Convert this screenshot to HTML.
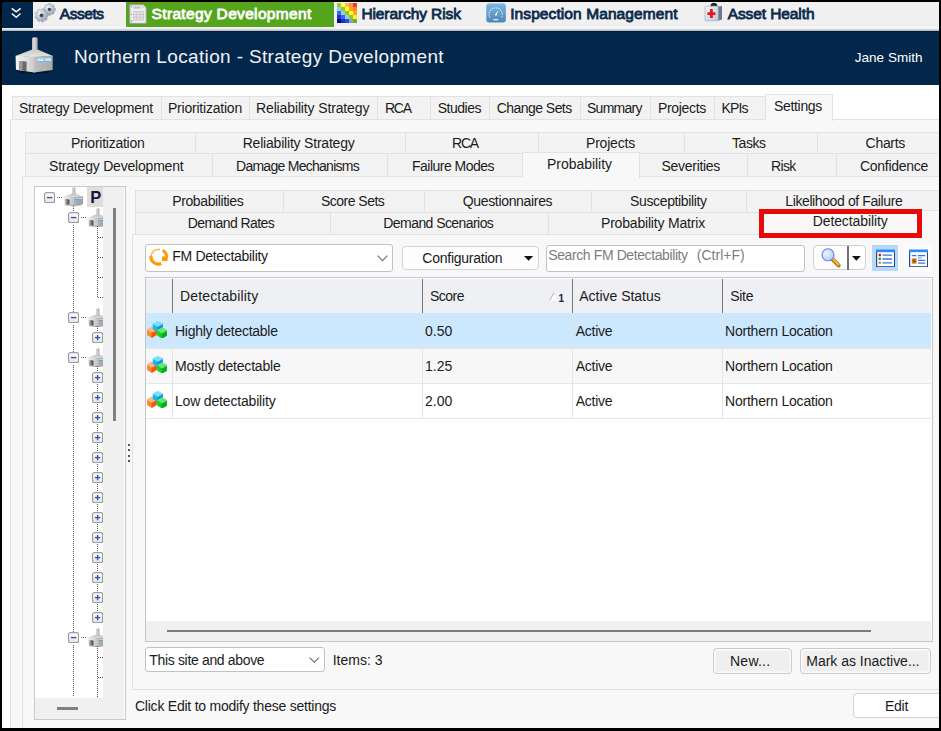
<!DOCTYPE html>
<html><head><meta charset="utf-8"><title>Strategy Development</title>
<style>
html,body{margin:0;padding:0;}
body{width:941px;height:731px;overflow:hidden;background:#000;font-family:"Liberation Sans", sans-serif;}
#app{position:absolute;left:0;top:0;width:941px;height:731px;overflow:hidden;background:#000;}
#app div,#app span,#app svg{position:absolute;box-sizing:border-box;}
#app span{white-space:pre;font-family:"Liberation Sans", sans-serif;}
</style></head><body>
<div id="app">
<div style="left:2px;top:2px;width:937px;height:726px;background:#ffffff;"></div>
<div style="left:2px;top:2px;width:937px;height:25px;background:#f0f0f0;"></div>
<div style="left:2px;top:27px;width:937px;height:4px;background:linear-gradient(#ffffff 0,#f6f7f8 28%,#d2d7dd 64%,#a9b2bc 100%);"></div>
<div style="left:2px;top:2px;width:31px;height:26px;background:#03274a;"></div>
<div style="left:126px;top:2px;width:208px;height:25px;background:#55a51c;"></div>
<div style="left:2px;top:31px;width:937px;height:53.5px;background:#03274a;"></div>
<div style="left:2px;top:31px;width:937px;height:1px;background:#021d3a;"></div>
<div style="left:9.5px;top:118.5px;width:940px;height:620px;background:#f8f8f8;border:1px solid #e2e2e2;"></div>
<div style="left:12px;top:96px;width:150px;height:24px;background:#f3f3f3;border:1px solid #e2e2e2;"></div>
<div style="left:161px;top:96px;width:89px;height:24px;background:#f3f3f3;border:1px solid #e2e2e2;"></div>
<div style="left:249px;top:96px;width:129px;height:24px;background:#f3f3f3;border:1px solid #e2e2e2;"></div>
<div style="left:377px;top:96px;width:54px;height:24px;background:#f3f3f3;border:1px solid #e2e2e2;"></div>
<div style="left:430px;top:96px;width:60px;height:24px;background:#f3f3f3;border:1px solid #e2e2e2;"></div>
<div style="left:489px;top:96px;width:92px;height:24px;background:#f3f3f3;border:1px solid #e2e2e2;"></div>
<div style="left:580px;top:96px;width:71px;height:24px;background:#f3f3f3;border:1px solid #e2e2e2;"></div>
<div style="left:650px;top:96px;width:65px;height:24px;background:#f3f3f3;border:1px solid #e2e2e2;"></div>
<div style="left:714px;top:96px;width:52px;height:24px;background:#f3f3f3;border:1px solid #e2e2e2;"></div>
<div style="left:765px;top:93.5px;width:68px;height:27px;background:#f8f8f8;border:1px solid #e2e2e2;border-bottom:none;"></div>
<div style="left:25px;top:131.5px;width:171px;height:22.5px;background:#f3f3f3;border:1px solid #e2e2e2;"></div>
<div style="left:195px;top:131.5px;width:211px;height:22.5px;background:#f3f3f3;border:1px solid #e2e2e2;"></div>
<div style="left:405px;top:131.5px;width:134px;height:22.5px;background:#f3f3f3;border:1px solid #e2e2e2;"></div>
<div style="left:538px;top:131.5px;width:147px;height:22.5px;background:#f3f3f3;border:1px solid #e2e2e2;"></div>
<div style="left:684px;top:131.5px;width:134px;height:22.5px;background:#f3f3f3;border:1px solid #e2e2e2;"></div>
<div style="left:817px;top:131.5px;width:137px;height:22.5px;background:#f3f3f3;border:1px solid #e2e2e2;"></div>
<div style="left:25px;top:153px;width:187.5px;height:24px;background:#f3f3f3;border:1px solid #e2e2e2;"></div>
<div style="left:211.5px;top:153px;width:176.5px;height:24px;background:#f3f3f3;border:1px solid #e2e2e2;"></div>
<div style="left:387px;top:153px;width:135.5px;height:24px;background:#f3f3f3;border:1px solid #e2e2e2;"></div>
<div style="left:639px;top:153px;width:108.5px;height:24px;background:#f3f3f3;border:1px solid #e2e2e2;"></div>
<div style="left:746.5px;top:153px;width:90.0px;height:24px;background:#f3f3f3;border:1px solid #e2e2e2;"></div>
<div style="left:835.5px;top:153px;width:118.5px;height:24px;background:#f3f3f3;border:1px solid #e2e2e2;"></div>
<div style="left:22px;top:176px;width:930px;height:560px;background:#f8f8f8;border:1px solid #e2e2e2;"></div>
<div style="left:521.5px;top:151.5px;width:118px;height:26px;background:#f8f8f8;border:1px solid #e2e2e2;border-bottom:none;"></div>
<div style="left:34.2px;top:186px;width:91.4px;height:533.6px;background:#ffffff;border:1.4px solid #c8cacd;"></div>
<div style="left:103px;top:187px;width:21.4px;height:531.6px;background:#f0f0f0;"></div>
<div style="left:35px;top:698px;width:89.4px;height:20.6px;background:#f0f0f0;"></div>
<div style="left:113px;top:208.3px;width:2.7px;height:212.3px;background:#808080;"></div>
<div style="left:57px;top:707.3px;width:21.2px;height:2.8px;background:#808080;"></div>
<div style="left:128px;top:444.0px;width:2px;height:2px;background:#555;"></div>
<div style="left:128px;top:449.3px;width:2px;height:2px;background:#555;"></div>
<div style="left:128px;top:454.6px;width:2px;height:2px;background:#555;"></div>
<div style="left:128px;top:459.9px;width:2px;height:2px;background:#555;"></div>
<div style="left:135px;top:189.5px;width:148.5px;height:23.0px;background:#f3f3f3;border:1px solid #e2e2e2;"></div>
<div style="left:282.5px;top:189.5px;width:142.0px;height:23.0px;background:#f3f3f3;border:1px solid #e2e2e2;"></div>
<div style="left:423.5px;top:189.5px;width:168.5px;height:23.0px;background:#f3f3f3;border:1px solid #e2e2e2;"></div>
<div style="left:591px;top:189.5px;width:156px;height:23.0px;background:#f3f3f3;border:1px solid #e2e2e2;"></div>
<div style="left:746px;top:189.5px;width:208px;height:23.0px;background:#f3f3f3;border:1px solid #e2e2e2;"></div>
<div style="left:135px;top:211.5px;width:195.5px;height:23.5px;background:#f3f3f3;border:1px solid #e2e2e2;"></div>
<div style="left:329.5px;top:211.5px;width:219.0px;height:23.5px;background:#f3f3f3;border:1px solid #e2e2e2;"></div>
<div style="left:547.5px;top:211.5px;width:214.5px;height:23.5px;background:#f3f3f3;border:1px solid #e2e2e2;"></div>
<div style="left:132.3px;top:234px;width:820px;height:455.5px;background:#f8f8f8;border:1px solid #e2e2e2;"></div>
<div style="left:761px;top:210px;width:192px;height:25px;background:#f8f8f8;border:1px solid #e2e2e2;border-bottom:none;"></div>
<div style="left:144.5px;top:244px;width:248.5px;height:27.7px;background:#fff;border:1px solid #c2c2c2;border-radius:3px;"></div>
<div style="left:402px;top:246px;width:136.6px;height:24px;background:#fdfdfd;border:1px solid #d4d4d4;border-radius:4px;"></div>
<div style="left:546px;top:244.5px;width:258.5px;height:27px;background:#fff;border:1px solid #c2c2c2;border-radius:3px;"></div>
<div style="left:812.6px;top:245.3px;width:53.2px;height:25px;background:#fefefe;border:1px solid #cfcfcf;border-radius:4.5px;"></div>
<div style="left:847.1px;top:246px;width:1.6px;height:23.6px;background:#707070;"></div>
<div style="left:872.2px;top:244.7px;width:26.3px;height:26px;background:#b9d7fa;"></div>
<div style="left:904px;top:243.5px;width:28px;height:28px;background:#fcfcfc;"></div>
<div style="left:144.5px;top:277px;width:788px;height:365px;background:#fff;border:1.5px solid #c6c6ca;"></div>
<div style="left:146px;top:278.5px;width:785px;height:34.5px;background:#eef0f4;"></div>
<div style="left:146px;top:313px;width:785px;height:34.5px;background:#cce8ff;"></div>
<div style="left:146px;top:347.5px;width:785px;height:35px;background:#f7f7f7;"></div>
<div style="left:146px;top:347.5px;width:785px;height:1px;background:#e7e7e7;"></div>
<div style="left:146px;top:382.5px;width:785px;height:1px;background:#e7e7e7;"></div>
<div style="left:146px;top:417.5px;width:785px;height:1px;background:#e7e7e7;"></div>
<div style="left:172px;top:278.5px;width:1px;height:34.5px;background:#777;"></div>
<div style="left:172px;top:313px;width:1px;height:105px;background:#e4e4e6;"></div>
<div style="left:422px;top:278.5px;width:1px;height:34.5px;background:#777;"></div>
<div style="left:422px;top:313px;width:1px;height:105px;background:#e4e4e6;"></div>
<div style="left:572px;top:278.5px;width:1px;height:34.5px;background:#777;"></div>
<div style="left:572px;top:313px;width:1px;height:105px;background:#e4e4e6;"></div>
<div style="left:722px;top:278.5px;width:1px;height:34.5px;background:#777;"></div>
<div style="left:722px;top:313px;width:1px;height:105px;background:#e4e4e6;"></div>
<div style="left:146px;top:621px;width:785px;height:19.5px;background:#f0f0f0;"></div>
<div style="left:166.5px;top:629.7px;width:704.5px;height:2px;background:#7a7a7a;"></div>
<div style="left:145px;top:646.5px;width:179.5px;height:25px;background:#fff;border:1px solid #c2c2c2;border-radius:3px;"></div>
<div style="left:713px;top:648px;width:78.5px;height:25.5px;background:#efefef;border:1px solid #cbcbcb;border-radius:4px;box-shadow:inset 0 0 0 1.5px #fbfbfb;"></div>
<div style="left:799.5px;top:648px;width:131px;height:25.5px;background:#efefef;border:1px solid #cbcbcb;border-radius:4px;box-shadow:inset 0 0 0 1.5px #fbfbfb;"></div>
<div style="left:853px;top:692.8px;width:100px;height:25.4px;background:#fff;border:1px solid #d2d2d2;border-radius:4px;"></div>
<svg width="0" height="0" style="left:0;top:0"><defs>
<linearGradient id="gLw" x1="0" y1="0" x2="1" y2="0"><stop offset="0" stop-color="#f4f4f4"/><stop offset="0.55" stop-color="#e2e2e2"/><stop offset="1" stop-color="#c9c9c9"/></linearGradient>
<linearGradient id="gRw" x1="0" y1="0" x2="1" y2="0"><stop offset="0" stop-color="#bdbdbd"/><stop offset="1" stop-color="#a9a9a9"/></linearGradient>
<linearGradient id="gRoof" x1="0" y1="0" x2="0" y2="1"><stop offset="0" stop-color="#c9c9c9"/><stop offset="1" stop-color="#e6e6e6"/></linearGradient>
<linearGradient id="gCh" x1="0" y1="0" x2="1" y2="0"><stop offset="0" stop-color="#bdbdbd"/><stop offset="0.4" stop-color="#dcdcdc"/><stop offset="1" stop-color="#a6a6a6"/></linearGradient>
<linearGradient id="gWin" x1="0" y1="0" x2="0" y2="1"><stop offset="0" stop-color="#8fd0f7"/><stop offset="0.55" stop-color="#e8f6ff"/><stop offset="0.7" stop-color="#5fb0e8"/><stop offset="1" stop-color="#8fd0f7"/></linearGradient>
<linearGradient id="gInsp" x1="0" y1="0" x2="0" y2="1"><stop offset="0" stop-color="#8fc1e8"/><stop offset="0.15" stop-color="#76aedb"/><stop offset="1" stop-color="#4f86b8"/></linearGradient>
<radialGradient id="gGear" cx="0.35" cy="0.3" r="0.8"><stop offset="0" stop-color="#eef1f5"/><stop offset="0.6" stop-color="#b4bdca"/><stop offset="1" stop-color="#8c97a8"/></radialGradient>
<radialGradient id="gBlue" cx="0.45" cy="0.25" r="0.8"><stop offset="0" stop-color="#7fe4ff"/><stop offset="0.5" stop-color="#14b4f6"/><stop offset="1" stop-color="#0f72d8"/></radialGradient>
<radialGradient id="gOr" cx="0.4" cy="0.2" r="0.85"><stop offset="0" stop-color="#ffc08a"/><stop offset="0.5" stop-color="#ff7a22"/><stop offset="1" stop-color="#e04a00"/></radialGradient>
<radialGradient id="gGr" cx="0.55" cy="0.25" r="0.8"><stop offset="0" stop-color="#6cf07a"/><stop offset="0.5" stop-color="#12cc24"/><stop offset="1" stop-color="#089a14"/></radialGradient>
<radialGradient id="gLens" cx="0.35" cy="0.35" r="0.8"><stop offset="0" stop-color="#eef6ff"/><stop offset="1" stop-color="#a9c9fa"/></radialGradient>
<linearGradient id="gHandle" x1="0" y1="0" x2="1" y2="0"><stop offset="0" stop-color="#f3cf78"/><stop offset="1" stop-color="#c77f0c"/></linearGradient>
<linearGradient id="gBox" x1="0" y1="0" x2="0" y2="1"><stop offset="0" stop-color="#ffffff"/><stop offset="1" stop-color="#e6e6e6"/></linearGradient>
<linearGradient id="gKit" x1="0" y1="0" x2="1" y2="1"><stop offset="0" stop-color="#f4f8fc"/><stop offset="1" stop-color="#b9c9dc"/></linearGradient>
<symbol id="factory" viewBox="0 0 40 38">
 <ellipse cx="20" cy="35.2" rx="17" ry="2.2" fill="#000" opacity="0.35"/>
 <path d="M18.3 1.6 Q18.3 0.3 21.2 0.3 Q24 0.3 24 1.6 L24 14 L18.3 14 Z" fill="url(#gCh)"/>
 <path d="M1.6 19.2 L17.6 12.9 L24.6 12.9 L39.4 19.2 L20.6 20.6 Z" fill="url(#gRoof)"/>
 <path d="M1.6 19 L20.6 20 L20.6 36.2 L2 33.4 Z" fill="url(#gLw)"/>
 <path d="M20.6 20 L39.4 19 L39.2 33.6 L20.6 36.2 Z" fill="url(#gRw)"/>
 <path d="M20.6 20 L20.6 36.2" stroke="#d9d9d9" stroke-width="0.8"/>
 <path d="M5.4 24.4 L12.8 24.8 L12.8 34.9 L5.4 33.8 Z" fill="#6a6a6a"/>
 <path d="M5.4 24.4 L8.6 24.6 L8.6 34.3 L5.4 33.8 Z" fill="#9a9a9a"/>
 <path d="M24 21.6 L30.2 21.3 L30.2 25.9 L24 26.2 Z" fill="url(#gWin)"/>
 <path d="M31.6 21.3 L37.6 21 L37.6 25.5 L31.6 25.8 Z" fill="url(#gWin)"/>
</symbol>
</defs></svg>
<svg style="left:9px;top:6px;" width="14" height="14" viewBox="0 0 14 14"><path d="M3.4 2.9 L7.2 5.9 L11 2.9 M3.4 8 L7.2 11.3 L11 8" fill="none" stroke="#fff" stroke-width="1.5" stroke-linecap="square"/></svg>
<svg style="left:34px;top:2px;" width="24" height="24" viewBox="0 0 24 24"><path d="M19.82 5.81 L21.28 6.22 L21.28 8.58 L19.82 8.99 L19.68 9.33 L20.42 10.65 L18.75 12.32 L17.43 11.58 L17.09 11.72 L16.68 13.18 L14.32 13.18 L13.91 11.72 L13.57 11.58 L12.25 12.32 L10.58 10.65 L11.32 9.33 L11.18 8.99 L9.72 8.58 L9.72 6.22 L11.18 5.81 L11.32 5.47 L10.58 4.15 L12.25 2.48 L13.57 3.22 L13.91 3.08 L14.32 1.62 L16.68 1.62 L17.09 3.08 L17.43 3.22 L18.75 2.48 L20.42 4.15 L19.68 5.47 Z" fill="url(#gGear)" stroke="#8a95a6" stroke-width="0.5"/><circle cx="15.5" cy="7.4" r="1.77" fill="#565f6e"/><circle cx="15.2" cy="7.1000000000000005" r="0.94" fill="#2f3642"/><path d="M12.50 11.82 L14.09 12.23 L14.09 14.57 L12.50 14.98 L12.37 15.34 L13.33 16.68 L11.82 18.47 L10.33 17.76 L10.01 17.95 L9.88 19.59 L7.57 20.00 L6.89 18.50 L6.52 18.43 L5.37 19.61 L3.34 18.44 L3.78 16.85 L3.54 16.56 L1.90 16.72 L1.10 14.52 L2.46 13.59 L2.46 13.21 L1.10 12.28 L1.90 10.08 L3.54 10.24 L3.78 9.95 L3.34 8.36 L5.37 7.19 L6.52 8.37 L6.89 8.30 L7.57 6.80 L9.88 7.21 L10.01 8.85 L10.33 9.04 L11.82 8.33 L13.33 10.12 L12.37 11.46 Z" fill="url(#gGear)" stroke="#8a95a6" stroke-width="0.5"/><circle cx="7.6" cy="13.4" r="1.98" fill="#565f6e"/><circle cx="7.3" cy="13.1" r="1.06" fill="#2f3642"/></svg>
<svg preserveAspectRatio="none" style="left:129px;top:3.5px;" width="18" height="20.2" viewBox="0 0 17.4 19.6"><path d="M0.8 0.8 L13.6 0.8 L16.6 3.6 L16.6 18.8 L0.8 18.8 Z" fill="#eeeeee" stroke="#a2a2a2" stroke-width="0.9"/><path d="M13.6 0.8 L13.6 3.6 L16.6 3.6" fill="#fafafa" stroke="#b5b5b5" stroke-width="0.6"/><rect x="4.6" y="2.6" width="6.6" height="1.8" fill="#bdbdbd"/><rect x="4.6" y="7.4" width="9.4" height="8.2" fill="#e2e2e2" stroke="#c2c2c2" stroke-width="0.7"/><path d="M7.6 7.4 V15.6 M11 7.4 V15.6 M4.6 10.2 H14 M4.6 12.9 H14" stroke="#c6c6c6" stroke-width="0.7"/><circle cx="2.5" cy="2.7" r="0.55" fill="#555"/><circle cx="2.5" cy="10" r="0.55" fill="#777"/><circle cx="2.5" cy="16.4" r="0.55" fill="#666"/></svg>
<svg style="left:337px;top:3.2px;" width="20" height="20" viewBox="0 0 20 20"><rect x="0" y="0" width="4.05" height="4.05" fill="#9fce22"/><rect x="4" y="0" width="4.05" height="4.05" fill="#ffff55"/><rect x="8" y="0" width="4.05" height="4.05" fill="#ffb668"/><rect x="12" y="0" width="4.05" height="4.05" fill="#ff9736"/><rect x="16" y="0" width="4.05" height="4.05" fill="#f13a34"/><rect x="0" y="4" width="4.05" height="4.05" fill="#96cbff"/><rect x="4" y="4" width="4.05" height="4.05" fill="#93c91c"/><rect x="8" y="4" width="4.05" height="4.05" fill="#ffff24"/><rect x="12" y="4" width="4.05" height="4.05" fill="#ffa526"/><rect x="16" y="4" width="4.05" height="4.05" fill="#ff8424"/><rect x="0" y="8" width="4.05" height="4.05" fill="#3466f2"/><rect x="4" y="8" width="4.05" height="4.05" fill="#96cbff"/><rect x="8" y="8" width="4.05" height="4.05" fill="#93c91c"/><rect x="12" y="8" width="4.05" height="4.05" fill="#ffff24"/><rect x="16" y="8" width="4.05" height="4.05" fill="#ffa526"/><rect x="0" y="12" width="4.05" height="4.05" fill="#2434b2"/><rect x="4" y="12" width="4.05" height="4.05" fill="#3466f2"/><rect x="8" y="12" width="4.05" height="4.05" fill="#96cbff"/><rect x="12" y="12" width="4.05" height="4.05" fill="#93c91c"/><rect x="16" y="12" width="4.05" height="4.05" fill="#f6f622"/><rect x="0" y="16" width="4.05" height="4.05" fill="#04048e"/><rect x="4" y="16" width="4.05" height="4.05" fill="#2232ae"/><rect x="8" y="16" width="4.05" height="4.05" fill="#2454d2"/><rect x="12" y="16" width="4.05" height="4.05" fill="#74a4e0"/><rect x="16" y="16" width="4.05" height="4.05" fill="#82aa12"/></svg>
<svg style="left:486px;top:3.4px;" width="20" height="20" viewBox="0 0 20 20"><rect x="0.3" y="0.3" width="19.6" height="19.2" rx="3" fill="url(#gInsp)"/><path d="M3.9 14.6 A6.6 6.6 0 1 1 15.5 14.6" fill="none" stroke="#eaf3fb" stroke-width="1.25" stroke-dasharray="1.3 1" opacity="0.85"/><path d="M8.6 12.2 L12.2 7.2 L10.6 12.6 Z" fill="#ffffff"/><rect x="7.2" y="16" width="5" height="1.3" fill="#d7e6f3"/></svg>
<svg style="left:703.6px;top:3px;" width="19" height="19" viewBox="0 0 19 19"><path d="M7.2 3.4 Q7.2 0.7 10 0.7 Q12.6 0.7 12.6 3.4" fill="#3a3a3a" stroke="#1d1d1d" stroke-width="1.5"/><path d="M14 3.4 L18 3 L18 16.6 L14.2 17.8 Z" fill="#6b7b8d"/><rect x="1" y="3.2" width="13.2" height="14.6" rx="0.8" fill="url(#gKit)" stroke="#9aa7b6" stroke-width="0.6"/><path d="M6 6 H8.8 V9.2 H11.4 V12 H8.8 V15 H6 V12 H3.4 V9.2 H6 Z" fill="#f4121a"/></svg>
<svg style="left:13.6px;top:36.8px;" width="39.4" height="37.4" viewBox="0 0 40 38" preserveAspectRatio="none"><use href="#factory"/></svg>
<svg style="left:148.6px;top:248px;" width="20" height="17.5" viewBox="0 0 20 17.5"><path d="M10.8 1.6 A7.2 7.2 0 0 0 2.2 8.6" fill="none" stroke="#ff9a0a" stroke-width="1.5" stroke-dasharray="1.5 0.6"/><path d="M2 8.2 A7.2 7.2 0 0 0 12.2 15.4" fill="none" stroke="#ff9a0a" stroke-width="3.3"/><path d="M13.6 2.4 A7.4 7.4 0 0 1 17.6 9.4" fill="none" stroke="#ff9a0a" stroke-width="3"/><path d="M13 8.4 L19.2 8 L18.4 12.9 L13 12.9 Z" fill="#ff9a0a"/></svg>
<svg style="left:524.4px;top:256.2px;" width="9.2" height="4.8" viewBox="0 0 9.2 4.8"><path d="M0 0 L9.2 0 L4.6 4.8 Z" fill="#111"/></svg>
<svg style="left:821.4px;top:248.2px;" width="21" height="21" viewBox="0 0 21 21"><path d="M11.4 11 L17.6 17.4" stroke="#b9770e" stroke-width="4.2" stroke-linecap="round"/><path d="M11.6 10.6 L17.4 16.6" stroke="#efc261" stroke-width="1.8" stroke-linecap="round"/><circle cx="7" cy="6.8" r="6" fill="url(#gLens)" stroke="#6c7cf2" stroke-width="1.1"/></svg>
<svg style="left:852.2px;top:256.2px;" width="8.8" height="4.8" viewBox="0 0 8.8 4.8"><path d="M0 0 L8.8 0 L4.4 4.8 Z" fill="#111"/></svg>
<svg style="left:875.8px;top:248.6px;" width="19.2" height="18.6" viewBox="0 0 19.2 18.6"><rect x="0.6" y="2" width="18" height="15.8" fill="#fff" stroke="#1c4b9c" stroke-width="1.2"/><rect x="0" y="0.5" width="19.2" height="2.7" fill="#2c8cf6"/><rect x="2.6" y="4.8" width="2.4" height="2.4" rx="0.6" fill="#d01414"/><rect x="2.6" y="8.6" width="2.4" height="2.4" rx="0.6" fill="#12a234"/><rect x="2.6" y="12.4" width="2.4" height="2.4" rx="0.6" fill="#ff7a00"/><path d="M6.4 6.2 H16 M6.4 10 H16 M6.4 13.8 H16" stroke="#3b78d2" stroke-width="1.3"/></svg>
<svg style="left:908.5px;top:248.6px;" width="19.2" height="18.6" viewBox="0 0 19.2 18.6"><rect x="0.6" y="2" width="18" height="15.8" fill="#fff" stroke="#1c4b9c" stroke-width="1.2"/><rect x="0" y="0.5" width="19.2" height="2.7" fill="#2c8cf6"/><path d="M2.8 6.6 H7.4 M9 6.6 H16.2 M9 11.4 H16.2 M9 14.2 H16.2" stroke="#3b78d2" stroke-width="1.3"/><path d="M9 8.9 H12.6" stroke="#6fa0e4" stroke-width="1.2"/><rect x="2.8" y="9.4" width="4.8" height="5.2" fill="#cf7c18"/><rect x="4.1" y="10.8" width="2.2" height="2.4" fill="#8a5210"/></svg>
<svg style="left:376.8px;top:255.2px;" width="11" height="6.4" viewBox="0 0 11 6.4"><path d="M0.6 0.6 L5.5 5.6000000000000005 L10.4 0.6" fill="none" stroke="#6f6f6f" stroke-width="1.1"/></svg>
<svg style="left:309.4px;top:657.2px;" width="10.6" height="6" viewBox="0 0 10.6 6"><path d="M0.6 0.6 L5.3 5.2 L10.0 0.6" fill="none" stroke="#6f6f6f" stroke-width="1.1"/></svg>
<svg style="left:147px;top:320.6px;" width="20" height="17.5" viewBox="0 0 20 17.5"><path d="M0.30 8.60 L4.90 11.20 L4.90 16.40 L0.30 13.80 Z" fill="#ff8630" stroke="#ff8630" stroke-width="0.9" stroke-linejoin="round"/><path d="M9.50 8.60 L9.50 13.80 L4.90 16.40 L4.90 11.20 Z" fill="#ee5c08" stroke="#ee5c08" stroke-width="0.9" stroke-linejoin="round"/><path d="M4.90 6.00 L9.50 8.60 L4.90 11.20 L0.30 8.60 Z" fill="#ffb57a" stroke="#ffb57a" stroke-width="0.9" stroke-linejoin="round"/><path d="M6.20 2.80 L10.80 5.40 L10.80 10.60 L6.20 8.00 Z" fill="#14b8f8" stroke="#14b8f8" stroke-width="0.9" stroke-linejoin="round"/><path d="M15.40 2.80 L15.40 8.00 L10.80 10.60 L10.80 5.40 Z" fill="#1090ea" stroke="#1090ea" stroke-width="0.9" stroke-linejoin="round"/><path d="M10.80 0.20 L15.40 2.80 L10.80 5.40 L6.20 2.80 Z" fill="#78e0ff" stroke="#78e0ff" stroke-width="0.9" stroke-linejoin="round"/><path d="M10.60 9.30 L15.20 11.90 L15.20 17.10 L10.60 14.50 Z" fill="#10d424" stroke="#10d424" stroke-width="0.9" stroke-linejoin="round"/><path d="M19.80 9.30 L19.80 14.50 L15.20 17.10 L15.20 11.90 Z" fill="#0aaa1a" stroke="#0aaa1a" stroke-width="0.9" stroke-linejoin="round"/><path d="M15.20 6.70 L19.80 9.30 L15.20 11.90 L10.60 9.30 Z" fill="#62ea70" stroke="#62ea70" stroke-width="0.9" stroke-linejoin="round"/></svg>
<svg style="left:147px;top:355.6px;" width="20" height="17.5" viewBox="0 0 20 17.5"><path d="M0.30 8.60 L4.90 11.20 L4.90 16.40 L0.30 13.80 Z" fill="#ff8630" stroke="#ff8630" stroke-width="0.9" stroke-linejoin="round"/><path d="M9.50 8.60 L9.50 13.80 L4.90 16.40 L4.90 11.20 Z" fill="#ee5c08" stroke="#ee5c08" stroke-width="0.9" stroke-linejoin="round"/><path d="M4.90 6.00 L9.50 8.60 L4.90 11.20 L0.30 8.60 Z" fill="#ffb57a" stroke="#ffb57a" stroke-width="0.9" stroke-linejoin="round"/><path d="M6.20 2.80 L10.80 5.40 L10.80 10.60 L6.20 8.00 Z" fill="#14b8f8" stroke="#14b8f8" stroke-width="0.9" stroke-linejoin="round"/><path d="M15.40 2.80 L15.40 8.00 L10.80 10.60 L10.80 5.40 Z" fill="#1090ea" stroke="#1090ea" stroke-width="0.9" stroke-linejoin="round"/><path d="M10.80 0.20 L15.40 2.80 L10.80 5.40 L6.20 2.80 Z" fill="#78e0ff" stroke="#78e0ff" stroke-width="0.9" stroke-linejoin="round"/><path d="M10.60 9.30 L15.20 11.90 L15.20 17.10 L10.60 14.50 Z" fill="#10d424" stroke="#10d424" stroke-width="0.9" stroke-linejoin="round"/><path d="M19.80 9.30 L19.80 14.50 L15.20 17.10 L15.20 11.90 Z" fill="#0aaa1a" stroke="#0aaa1a" stroke-width="0.9" stroke-linejoin="round"/><path d="M15.20 6.70 L19.80 9.30 L15.20 11.90 L10.60 9.30 Z" fill="#62ea70" stroke="#62ea70" stroke-width="0.9" stroke-linejoin="round"/></svg>
<svg style="left:147px;top:390.6px;" width="20" height="17.5" viewBox="0 0 20 17.5"><path d="M0.30 8.60 L4.90 11.20 L4.90 16.40 L0.30 13.80 Z" fill="#ff8630" stroke="#ff8630" stroke-width="0.9" stroke-linejoin="round"/><path d="M9.50 8.60 L9.50 13.80 L4.90 16.40 L4.90 11.20 Z" fill="#ee5c08" stroke="#ee5c08" stroke-width="0.9" stroke-linejoin="round"/><path d="M4.90 6.00 L9.50 8.60 L4.90 11.20 L0.30 8.60 Z" fill="#ffb57a" stroke="#ffb57a" stroke-width="0.9" stroke-linejoin="round"/><path d="M6.20 2.80 L10.80 5.40 L10.80 10.60 L6.20 8.00 Z" fill="#14b8f8" stroke="#14b8f8" stroke-width="0.9" stroke-linejoin="round"/><path d="M15.40 2.80 L15.40 8.00 L10.80 10.60 L10.80 5.40 Z" fill="#1090ea" stroke="#1090ea" stroke-width="0.9" stroke-linejoin="round"/><path d="M10.80 0.20 L15.40 2.80 L10.80 5.40 L6.20 2.80 Z" fill="#78e0ff" stroke="#78e0ff" stroke-width="0.9" stroke-linejoin="round"/><path d="M10.60 9.30 L15.20 11.90 L15.20 17.10 L10.60 14.50 Z" fill="#10d424" stroke="#10d424" stroke-width="0.9" stroke-linejoin="round"/><path d="M19.80 9.30 L19.80 14.50 L15.20 17.10 L15.20 11.90 Z" fill="#0aaa1a" stroke="#0aaa1a" stroke-width="0.9" stroke-linejoin="round"/><path d="M15.20 6.70 L19.80 9.30 L15.20 11.90 L10.60 9.30 Z" fill="#62ea70" stroke="#62ea70" stroke-width="0.9" stroke-linejoin="round"/></svg>
<svg style="left:549px;top:291.6px;" width="9.6" height="9.2" viewBox="0 0 9.6 9.2"><path d="M0.8 8.4 L4.8 0.8 L8.8 8.4 Z" fill="#ffffff"/><path d="M0.8 8.4 L4.8 0.8" stroke="#a9a9a9" stroke-width="0.9" fill="none"/></svg>
<svg style="left:44.3px;top:192.2px;" width="11.2" height="11.2" viewBox="0 0 11.2 11.2"><rect x="0.6" y="0.6" width="10" height="10" rx="1.8" fill="url(#gBox)" stroke="#9c9c9c" stroke-width="1.2"/><rect x="2.9" y="4.9" width="5.4" height="1.4" fill="#3653b4"/></svg>
<div style="left:57px;top:197.0px;width:6px;height:1px;background:repeating-linear-gradient(to right,#555 0,#555 1px,transparent 1px,transparent 2px);"></div>
<svg style="left:62.7px;top:187px;filter:brightness(0.9) contrast(1.2);" width="20.6" height="19.2" viewBox="0 0 40 38" preserveAspectRatio="none"><use href="#factory"/></svg>
<div style="left:87px;top:187px;width:16px;height:20px;background:#dedede;"></div>
<div style="left:73px;top:206px;width:1px;height:6px;background:repeating-linear-gradient(to bottom,#555 0,#555 1px,transparent 1px,transparent 2px);"></div>
<div style="left:73px;top:223px;width:1px;height:474px;background:repeating-linear-gradient(to bottom,#555 0,#555 1px,transparent 1px,transparent 2px);"></div>
<div style="left:68px;top:211.5px;width:12px;height:12px;background:#fff;"></div>
<svg style="left:68.1px;top:212.0px;" width="11.2" height="11.2" viewBox="0 0 11.2 11.2"><rect x="0.6" y="0.6" width="10" height="10" rx="1.8" fill="url(#gBox)" stroke="#9c9c9c" stroke-width="1.2"/><rect x="2.9" y="4.9" width="5.4" height="1.4" fill="#3653b4"/></svg>
<div style="left:80.5px;top:217.0px;width:6.5px;height:1px;background:repeating-linear-gradient(to right,#555 0,#555 1px,transparent 1px,transparent 2px);"></div>
<div style="left:87px;top:207.5px;width:16px;height:19.2px;overflow:hidden"><svg style="left:0;top:0;filter:brightness(0.9) contrast(1.2);" width="20.6" height="19.2" viewBox="0 0 40 38" preserveAspectRatio="none"><use href="#factory"/></svg></div>
<div style="left:68px;top:311.5px;width:12px;height:12px;background:#fff;"></div>
<svg style="left:68.1px;top:312.0px;" width="11.2" height="11.2" viewBox="0 0 11.2 11.2"><rect x="0.6" y="0.6" width="10" height="10" rx="1.8" fill="url(#gBox)" stroke="#9c9c9c" stroke-width="1.2"/><rect x="2.9" y="4.9" width="5.4" height="1.4" fill="#3653b4"/></svg>
<div style="left:80.5px;top:317.0px;width:6.5px;height:1px;background:repeating-linear-gradient(to right,#555 0,#555 1px,transparent 1px,transparent 2px);"></div>
<div style="left:87px;top:307.5px;width:16px;height:19.2px;overflow:hidden"><svg style="left:0;top:0;filter:brightness(0.9) contrast(1.2);" width="20.6" height="19.2" viewBox="0 0 40 38" preserveAspectRatio="none"><use href="#factory"/></svg></div>
<div style="left:68px;top:351.5px;width:12px;height:12px;background:#fff;"></div>
<svg style="left:68.1px;top:352.0px;" width="11.2" height="11.2" viewBox="0 0 11.2 11.2"><rect x="0.6" y="0.6" width="10" height="10" rx="1.8" fill="url(#gBox)" stroke="#9c9c9c" stroke-width="1.2"/><rect x="2.9" y="4.9" width="5.4" height="1.4" fill="#3653b4"/></svg>
<div style="left:80.5px;top:357.0px;width:6.5px;height:1px;background:repeating-linear-gradient(to right,#555 0,#555 1px,transparent 1px,transparent 2px);"></div>
<div style="left:87px;top:347.5px;width:16px;height:19.2px;overflow:hidden"><svg style="left:0;top:0;filter:brightness(0.9) contrast(1.2);" width="20.6" height="19.2" viewBox="0 0 40 38" preserveAspectRatio="none"><use href="#factory"/></svg></div>
<div style="left:68px;top:631.5px;width:12px;height:12px;background:#fff;"></div>
<svg style="left:68.1px;top:632.0px;" width="11.2" height="11.2" viewBox="0 0 11.2 11.2"><rect x="0.6" y="0.6" width="10" height="10" rx="1.8" fill="url(#gBox)" stroke="#9c9c9c" stroke-width="1.2"/><rect x="2.9" y="4.9" width="5.4" height="1.4" fill="#3653b4"/></svg>
<div style="left:80.5px;top:637.0px;width:6.5px;height:1px;background:repeating-linear-gradient(to right,#555 0,#555 1px,transparent 1px,transparent 2px);"></div>
<div style="left:87px;top:627.5px;width:16px;height:19.2px;overflow:hidden"><svg style="left:0;top:0;filter:brightness(0.9) contrast(1.2);" width="20.6" height="19.2" viewBox="0 0 40 38" preserveAspectRatio="none"><use href="#factory"/></svg></div>
<div style="left:97.3px;top:226px;width:1px;height:72px;background:repeating-linear-gradient(to bottom,#555 0,#555 1px,transparent 1px,transparent 2px);"></div>
<div style="left:98px;top:237.0px;width:5px;height:1px;background:repeating-linear-gradient(to right,#555 0,#555 1px,transparent 1px,transparent 2px);"></div>
<div style="left:98px;top:257.0px;width:5px;height:1px;background:repeating-linear-gradient(to right,#555 0,#555 1px,transparent 1px,transparent 2px);"></div>
<div style="left:98px;top:277.0px;width:5px;height:1px;background:repeating-linear-gradient(to right,#555 0,#555 1px,transparent 1px,transparent 2px);"></div>
<div style="left:98px;top:297.0px;width:5px;height:1px;background:repeating-linear-gradient(to right,#555 0,#555 1px,transparent 1px,transparent 2px);"></div>
<div style="left:97.3px;top:326px;width:1px;height:6px;background:repeating-linear-gradient(to bottom,#555 0,#555 1px,transparent 1px,transparent 2px);"></div>
<svg style="left:91.8px;top:332px;" width="11.2" height="11.2" viewBox="0 0 11.2 11.2"><rect x="0.6" y="0.6" width="10" height="10" rx="1.8" fill="url(#gBox)" stroke="#9c9c9c" stroke-width="1.2"/><rect x="2.9" y="4.9" width="5.4" height="1.4" fill="#3653b4"/><rect x="4.9" y="2.9" width="1.4" height="5.4" fill="#3653b4"/></svg>
<div style="left:97.3px;top:366px;width:1px;height:257px;background:repeating-linear-gradient(to bottom,#555 0,#555 1px,transparent 1px,transparent 2px);"></div>
<div style="left:91.5px;top:371.5px;width:11.5px;height:12px;background:#fff;"></div>
<svg style="left:91.8px;top:372.0px;" width="11.2" height="11.2" viewBox="0 0 11.2 11.2"><rect x="0.6" y="0.6" width="10" height="10" rx="1.8" fill="url(#gBox)" stroke="#9c9c9c" stroke-width="1.2"/><rect x="2.9" y="4.9" width="5.4" height="1.4" fill="#3653b4"/><rect x="4.9" y="2.9" width="1.4" height="5.4" fill="#3653b4"/></svg>
<div style="left:91.5px;top:391.5px;width:11.5px;height:12px;background:#fff;"></div>
<svg style="left:91.8px;top:392.0px;" width="11.2" height="11.2" viewBox="0 0 11.2 11.2"><rect x="0.6" y="0.6" width="10" height="10" rx="1.8" fill="url(#gBox)" stroke="#9c9c9c" stroke-width="1.2"/><rect x="2.9" y="4.9" width="5.4" height="1.4" fill="#3653b4"/><rect x="4.9" y="2.9" width="1.4" height="5.4" fill="#3653b4"/></svg>
<div style="left:91.5px;top:411.5px;width:11.5px;height:12px;background:#fff;"></div>
<svg style="left:91.8px;top:412.0px;" width="11.2" height="11.2" viewBox="0 0 11.2 11.2"><rect x="0.6" y="0.6" width="10" height="10" rx="1.8" fill="url(#gBox)" stroke="#9c9c9c" stroke-width="1.2"/><rect x="2.9" y="4.9" width="5.4" height="1.4" fill="#3653b4"/><rect x="4.9" y="2.9" width="1.4" height="5.4" fill="#3653b4"/></svg>
<div style="left:91.5px;top:431.5px;width:11.5px;height:12px;background:#fff;"></div>
<svg style="left:91.8px;top:432.0px;" width="11.2" height="11.2" viewBox="0 0 11.2 11.2"><rect x="0.6" y="0.6" width="10" height="10" rx="1.8" fill="url(#gBox)" stroke="#9c9c9c" stroke-width="1.2"/><rect x="2.9" y="4.9" width="5.4" height="1.4" fill="#3653b4"/><rect x="4.9" y="2.9" width="1.4" height="5.4" fill="#3653b4"/></svg>
<div style="left:91.5px;top:451.5px;width:11.5px;height:12px;background:#fff;"></div>
<svg style="left:91.8px;top:452.0px;" width="11.2" height="11.2" viewBox="0 0 11.2 11.2"><rect x="0.6" y="0.6" width="10" height="10" rx="1.8" fill="url(#gBox)" stroke="#9c9c9c" stroke-width="1.2"/><rect x="2.9" y="4.9" width="5.4" height="1.4" fill="#3653b4"/><rect x="4.9" y="2.9" width="1.4" height="5.4" fill="#3653b4"/></svg>
<div style="left:91.5px;top:471.5px;width:11.5px;height:12px;background:#fff;"></div>
<svg style="left:91.8px;top:472.0px;" width="11.2" height="11.2" viewBox="0 0 11.2 11.2"><rect x="0.6" y="0.6" width="10" height="10" rx="1.8" fill="url(#gBox)" stroke="#9c9c9c" stroke-width="1.2"/><rect x="2.9" y="4.9" width="5.4" height="1.4" fill="#3653b4"/><rect x="4.9" y="2.9" width="1.4" height="5.4" fill="#3653b4"/></svg>
<div style="left:91.5px;top:491.5px;width:11.5px;height:12px;background:#fff;"></div>
<svg style="left:91.8px;top:492.0px;" width="11.2" height="11.2" viewBox="0 0 11.2 11.2"><rect x="0.6" y="0.6" width="10" height="10" rx="1.8" fill="url(#gBox)" stroke="#9c9c9c" stroke-width="1.2"/><rect x="2.9" y="4.9" width="5.4" height="1.4" fill="#3653b4"/><rect x="4.9" y="2.9" width="1.4" height="5.4" fill="#3653b4"/></svg>
<div style="left:91.5px;top:511.5px;width:11.5px;height:12px;background:#fff;"></div>
<svg style="left:91.8px;top:512.0px;" width="11.2" height="11.2" viewBox="0 0 11.2 11.2"><rect x="0.6" y="0.6" width="10" height="10" rx="1.8" fill="url(#gBox)" stroke="#9c9c9c" stroke-width="1.2"/><rect x="2.9" y="4.9" width="5.4" height="1.4" fill="#3653b4"/><rect x="4.9" y="2.9" width="1.4" height="5.4" fill="#3653b4"/></svg>
<div style="left:91.5px;top:531.5px;width:11.5px;height:12px;background:#fff;"></div>
<svg style="left:91.8px;top:532.0px;" width="11.2" height="11.2" viewBox="0 0 11.2 11.2"><rect x="0.6" y="0.6" width="10" height="10" rx="1.8" fill="url(#gBox)" stroke="#9c9c9c" stroke-width="1.2"/><rect x="2.9" y="4.9" width="5.4" height="1.4" fill="#3653b4"/><rect x="4.9" y="2.9" width="1.4" height="5.4" fill="#3653b4"/></svg>
<div style="left:91.5px;top:551.5px;width:11.5px;height:12px;background:#fff;"></div>
<svg style="left:91.8px;top:552.0px;" width="11.2" height="11.2" viewBox="0 0 11.2 11.2"><rect x="0.6" y="0.6" width="10" height="10" rx="1.8" fill="url(#gBox)" stroke="#9c9c9c" stroke-width="1.2"/><rect x="2.9" y="4.9" width="5.4" height="1.4" fill="#3653b4"/><rect x="4.9" y="2.9" width="1.4" height="5.4" fill="#3653b4"/></svg>
<div style="left:91.5px;top:571.5px;width:11.5px;height:12px;background:#fff;"></div>
<svg style="left:91.8px;top:572.0px;" width="11.2" height="11.2" viewBox="0 0 11.2 11.2"><rect x="0.6" y="0.6" width="10" height="10" rx="1.8" fill="url(#gBox)" stroke="#9c9c9c" stroke-width="1.2"/><rect x="2.9" y="4.9" width="5.4" height="1.4" fill="#3653b4"/><rect x="4.9" y="2.9" width="1.4" height="5.4" fill="#3653b4"/></svg>
<div style="left:91.5px;top:591.5px;width:11.5px;height:12px;background:#fff;"></div>
<svg style="left:91.8px;top:592.0px;" width="11.2" height="11.2" viewBox="0 0 11.2 11.2"><rect x="0.6" y="0.6" width="10" height="10" rx="1.8" fill="url(#gBox)" stroke="#9c9c9c" stroke-width="1.2"/><rect x="2.9" y="4.9" width="5.4" height="1.4" fill="#3653b4"/><rect x="4.9" y="2.9" width="1.4" height="5.4" fill="#3653b4"/></svg>
<div style="left:91.5px;top:611.5px;width:11.5px;height:12px;background:#fff;"></div>
<svg style="left:91.8px;top:612.0px;" width="11.2" height="11.2" viewBox="0 0 11.2 11.2"><rect x="0.6" y="0.6" width="10" height="10" rx="1.8" fill="url(#gBox)" stroke="#9c9c9c" stroke-width="1.2"/><rect x="2.9" y="4.9" width="5.4" height="1.4" fill="#3653b4"/><rect x="4.9" y="2.9" width="1.4" height="5.4" fill="#3653b4"/></svg>
<div style="left:97.3px;top:646px;width:1px;height:51px;background:repeating-linear-gradient(to bottom,#555 0,#555 1px,transparent 1px,transparent 2px);"></div>
<div style="left:98px;top:657.0px;width:5px;height:1px;background:repeating-linear-gradient(to right,#555 0,#555 1px,transparent 1px,transparent 2px);"></div>
<div style="left:98px;top:677.0px;width:5px;height:1px;background:repeating-linear-gradient(to right,#555 0,#555 1px,transparent 1px,transparent 2px);"></div>
<span style="left:59.80px;top:5.00px;font-size:15.5px;line-height:17px;color:#0b2a4c;font-weight:normal;letter-spacing:-0.469px;-webkit-text-stroke:0.8px #0b2a4c;">Assets</span>
<span style="left:151.60px;top:5.00px;font-size:15.5px;line-height:17px;color:#ffffff;font-weight:normal;letter-spacing:0.332px;-webkit-text-stroke:0.8px #ffffff;">Strategy Development</span>
<span style="left:361.40px;top:5.00px;font-size:15.5px;line-height:17px;color:#0b2a4c;font-weight:normal;letter-spacing:-0.098px;-webkit-text-stroke:0.8px #0b2a4c;">Hierarchy Risk</span>
<span style="left:510.20px;top:5.00px;font-size:15.5px;line-height:17px;color:#0b2a4c;font-weight:normal;letter-spacing:0.093px;-webkit-text-stroke:0.8px #0b2a4c;">Inspection Management</span>
<span style="left:727.70px;top:5.00px;font-size:15.5px;line-height:17px;color:#0b2a4c;font-weight:normal;letter-spacing:-0.091px;-webkit-text-stroke:0.8px #0b2a4c;">Asset Health</span>
<span style="left:74.00px;top:46.00px;font-size:19px;line-height:21px;color:#eef2f6;font-weight:normal;letter-spacing:0.352px;">Northern Location - Strategy Development</span>
<span style="left:854.70px;top:50.00px;font-size:13.5px;line-height:15px;color:#ffffff;font-weight:normal;letter-spacing:0.035px;">Jane Smith</span>
<span style="left:19.00px;top:100.00px;font-size:14px;line-height:16px;color:#1b1b1b;font-weight:normal;letter-spacing:-0.227px;">Strategy Development</span>
<span style="left:168.00px;top:100.00px;font-size:14px;line-height:16px;color:#1b1b1b;font-weight:normal;letter-spacing:-0.217px;">Prioritization</span>
<span style="left:256.00px;top:100.00px;font-size:14px;line-height:16px;color:#1b1b1b;font-weight:normal;letter-spacing:-0.132px;">Reliability Strategy</span>
<span style="left:385.00px;top:100.00px;font-size:14px;line-height:16px;color:#1b1b1b;font-weight:normal;letter-spacing:-1.288px;">RCA</span>
<span style="left:437.70px;top:100.00px;font-size:14px;line-height:16px;color:#1b1b1b;font-weight:normal;letter-spacing:-0.486px;">Studies</span>
<span style="left:496.70px;top:100.00px;font-size:14px;line-height:16px;color:#1b1b1b;font-weight:normal;letter-spacing:-0.541px;">Change Sets</span>
<span style="left:587.00px;top:100.00px;font-size:14px;line-height:16px;color:#1b1b1b;font-weight:normal;letter-spacing:-0.744px;">Summary</span>
<span style="left:658.00px;top:100.00px;font-size:14px;line-height:16px;color:#1b1b1b;font-weight:normal;letter-spacing:-0.322px;">Projects</span>
<span style="left:721.40px;top:100.00px;font-size:14px;line-height:16px;color:#1b1b1b;font-weight:normal;letter-spacing:-0.795px;">KPIs</span>
<span style="left:774.00px;top:98.00px;font-size:14px;line-height:16px;color:#1b1b1b;font-weight:normal;letter-spacing:-0.324px;">Settings</span>
<span style="left:71.00px;top:135.00px;font-size:14px;line-height:16px;color:#1b1b1b;font-weight:normal;letter-spacing:-0.252px;">Prioritization</span>
<span style="left:242.70px;top:135.00px;font-size:14px;line-height:16px;color:#1b1b1b;font-weight:normal;letter-spacing:-0.202px;">Reliability Strategy</span>
<span style="left:452.00px;top:135.00px;font-size:14px;line-height:16px;color:#1b1b1b;font-weight:normal;letter-spacing:-1.188px;">RCA</span>
<span style="left:586.00px;top:135.00px;font-size:14px;line-height:16px;color:#1b1b1b;font-weight:normal;letter-spacing:-0.197px;">Projects</span>
<span style="left:732.00px;top:135.00px;font-size:14px;line-height:16px;color:#1b1b1b;font-weight:normal;letter-spacing:-0.439px;">Tasks</span>
<span style="left:865.60px;top:135.00px;font-size:14px;line-height:16px;color:#1b1b1b;font-weight:normal;letter-spacing:-0.306px;">Charts</span>
<span style="left:49.00px;top:158.00px;font-size:14px;line-height:16px;color:#1b1b1b;font-weight:normal;letter-spacing:-0.202px;">Strategy Development</span>
<span style="left:236.00px;top:158.00px;font-size:14px;line-height:16px;color:#1b1b1b;font-weight:normal;letter-spacing:-0.729px;">Damage Mechanisms</span>
<span style="left:412.00px;top:158.00px;font-size:14px;line-height:16px;color:#1b1b1b;font-weight:normal;letter-spacing:-0.516px;">Failure Modes</span>
<span style="left:661.60px;top:158.00px;font-size:14px;line-height:16px;color:#1b1b1b;font-weight:normal;letter-spacing:-0.307px;">Severities</span>
<span style="left:771.00px;top:158.00px;font-size:14px;line-height:16px;color:#1b1b1b;font-weight:normal;letter-spacing:-0.659px;">Risk</span>
<span style="left:860.00px;top:158.00px;font-size:14px;line-height:16px;color:#1b1b1b;font-weight:normal;letter-spacing:-0.283px;">Confidence</span>
<span style="left:547.00px;top:156.00px;font-size:14px;line-height:16px;color:#1b1b1b;font-weight:normal;letter-spacing:-0.034px;">Probability</span>
<span style="left:172.30px;top:193.00px;font-size:14px;line-height:16px;color:#1b1b1b;font-weight:normal;letter-spacing:-0.405px;">Probabilities</span>
<span style="left:321.00px;top:193.00px;font-size:14px;line-height:16px;color:#1b1b1b;font-weight:normal;letter-spacing:-0.518px;">Score Sets</span>
<span style="left:462.70px;top:193.00px;font-size:14px;line-height:16px;color:#1b1b1b;font-weight:normal;letter-spacing:-0.327px;">Questionnaires</span>
<span style="left:630.00px;top:193.00px;font-size:14px;line-height:16px;color:#1b1b1b;font-weight:normal;letter-spacing:-0.357px;">Susceptibility</span>
<span style="left:785.30px;top:193.00px;font-size:14px;line-height:16px;color:#1b1b1b;font-weight:normal;letter-spacing:-0.395px;">Likelihood of Failure</span>
<span style="left:187.70px;top:215.00px;font-size:14px;line-height:16px;color:#1b1b1b;font-weight:normal;letter-spacing:-0.566px;">Demand Rates</span>
<span style="left:383.30px;top:215.00px;font-size:14px;line-height:16px;color:#1b1b1b;font-weight:normal;letter-spacing:-0.566px;">Demand Scenarios</span>
<span style="left:601.00px;top:215.00px;font-size:14px;line-height:16px;color:#1b1b1b;font-weight:normal;letter-spacing:-0.188px;">Probability Matrix</span>
<span style="left:812.70px;top:213.00px;font-size:14px;line-height:16px;color:#1b1b1b;font-weight:normal;letter-spacing:-0.097px;">Detectability</span>
<span style="left:172.30px;top:248.00px;font-size:14px;line-height:16px;color:#1b1b1b;font-weight:normal;letter-spacing:-0.310px;">FM Detectability</span>
<span style="left:422.30px;top:250.00px;font-size:14px;line-height:16px;color:#1b1b1b;font-weight:normal;letter-spacing:-0.245px;">Configuration</span>
<span style="left:548.30px;top:247.00px;font-size:14px;line-height:16px;color:#7d7d7d;font-weight:normal;letter-spacing:-0.400px;">Search FM Detectability</span>
<span style="left:696.70px;top:247.00px;font-size:14px;line-height:16px;color:#7d7d7d;font-weight:normal;letter-spacing:0.034px;">(Ctrl+F)</span>
<span style="left:180.00px;top:288.00px;font-size:14px;line-height:16px;color:#1b1b1b;font-weight:normal;letter-spacing:0.156px;">Detectability</span>
<span style="left:430.00px;top:288.00px;font-size:14px;line-height:16px;color:#1b1b1b;font-weight:normal;letter-spacing:-0.516px;">Score</span>
<span style="left:579.30px;top:288.00px;font-size:14px;line-height:16px;color:#1b1b1b;font-weight:normal;letter-spacing:-0.023px;">Active Status</span>
<span style="left:730.20px;top:288.00px;font-size:14px;line-height:16px;color:#1b1b1b;font-weight:normal;letter-spacing:-0.256px;">Site</span>
<span style="left:558.60px;top:293.00px;font-size:10px;line-height:11px;color:#22223a;font-weight:bold;letter-spacing:0.000px;">1</span>
<span style="left:175.00px;top:323.00px;font-size:14px;line-height:16px;color:#1b1b1b;font-weight:normal;letter-spacing:-0.277px;">Highly detectable</span>
<span style="left:425.00px;top:323.00px;font-size:14px;line-height:16px;color:#1b1b1b;font-weight:normal;letter-spacing:0.013px;">0.50</span>
<span style="left:575.70px;top:323.00px;font-size:14px;line-height:16px;color:#1b1b1b;font-weight:normal;letter-spacing:-0.254px;">Active</span>
<span style="left:725.00px;top:323.00px;font-size:14px;line-height:16px;color:#1b1b1b;font-weight:normal;letter-spacing:-0.212px;">Northern Location</span>
<span style="left:175.00px;top:358.00px;font-size:14px;line-height:16px;color:#1b1b1b;font-weight:normal;letter-spacing:-0.203px;">Mostly detectable</span>
<span style="left:425.00px;top:358.00px;font-size:14px;line-height:16px;color:#1b1b1b;font-weight:normal;letter-spacing:0.013px;">1.25</span>
<span style="left:575.70px;top:358.00px;font-size:14px;line-height:16px;color:#1b1b1b;font-weight:normal;letter-spacing:-0.254px;">Active</span>
<span style="left:725.00px;top:358.00px;font-size:14px;line-height:16px;color:#1b1b1b;font-weight:normal;letter-spacing:-0.212px;">Northern Location</span>
<span style="left:175.00px;top:393.00px;font-size:14px;line-height:16px;color:#1b1b1b;font-weight:normal;letter-spacing:-0.177px;">Low detectability</span>
<span style="left:425.00px;top:393.00px;font-size:14px;line-height:16px;color:#1b1b1b;font-weight:normal;letter-spacing:0.013px;">2.00</span>
<span style="left:575.70px;top:393.00px;font-size:14px;line-height:16px;color:#1b1b1b;font-weight:normal;letter-spacing:-0.254px;">Active</span>
<span style="left:725.00px;top:393.00px;font-size:14px;line-height:16px;color:#1b1b1b;font-weight:normal;letter-spacing:-0.212px;">Northern Location</span>
<span style="left:149.30px;top:652.00px;font-size:14px;line-height:16px;color:#1b1b1b;font-weight:normal;letter-spacing:-0.337px;">This site and above</span>
<span style="left:332.70px;top:652.00px;font-size:14px;line-height:16px;color:#1b1b1b;font-weight:normal;letter-spacing:0.000px;">Items: 3</span>
<span style="left:730.00px;top:653.00px;font-size:14px;line-height:16px;color:#1b1b1b;font-weight:normal;letter-spacing:0.249px;">New...</span>
<span style="left:806.30px;top:653.00px;font-size:14px;line-height:16px;color:#1b1b1b;font-weight:normal;letter-spacing:-0.021px;">Mark as Inactive...</span>
<span style="left:135.00px;top:698.00px;font-size:14px;line-height:16px;color:#1b1b1b;font-weight:normal;letter-spacing:-0.237px;">Click Edit to modify these settings</span>
<span style="left:884.90px;top:698.00px;font-size:14px;line-height:16px;color:#1b1b1b;font-weight:normal;letter-spacing:-0.206px;">Edit</span>
<span style="left:90.20px;top:188.00px;font-size:16.5px;line-height:18px;color:#15153a;font-weight:bold;letter-spacing:0.000px;">P</span>
<div style="left:759px;top:209px;width:163px;height:29px;border:5px solid #e60a0a;"></div>
<div style="left:0;top:0;width:941px;height:2px;background:#000"></div>
<div style="left:0;top:728px;width:941px;height:3px;background:#000"></div>
<div style="left:0;top:0;width:2px;height:731px;background:#000"></div>
<div style="left:939px;top:0;width:2px;height:731px;background:#000"></div>
</div>
</body></html>
